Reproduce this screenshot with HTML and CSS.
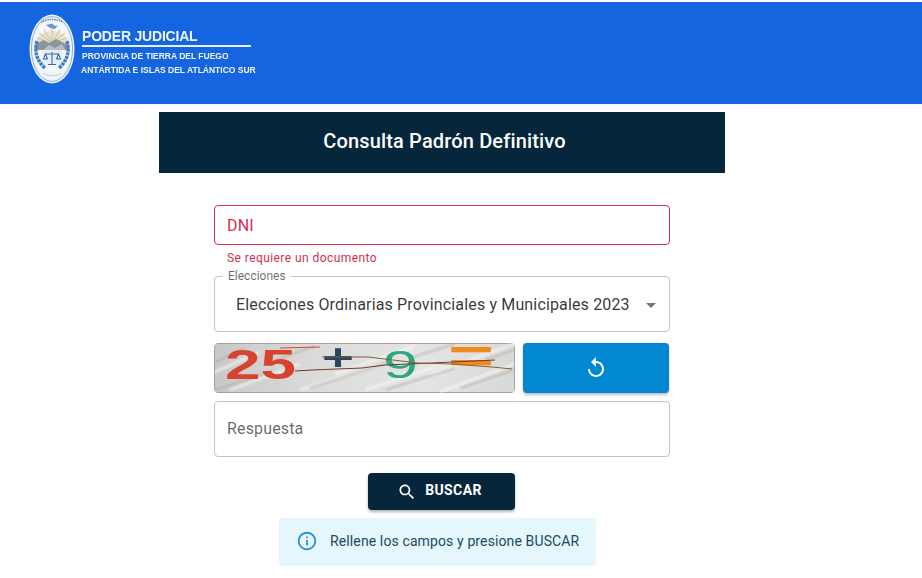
FILE: index.html
```html
<!DOCTYPE html>
<html lang="es">
<head>
<meta charset="utf-8">
<title>Consulta Padrón Definitivo</title>
<link rel="stylesheet" href="styles.css">
</head>
<body>
<header class="site-header">
  <svg class="seal" width="46" height="70" viewBox="0 0 46 70">
    <ellipse cx="23" cy="35" rx="22.5" ry="34.5" fill="#eef3f9"/>
    <ellipse cx="23" cy="35" rx="20.6" ry="32.4" fill="none" stroke="#8fb2de" stroke-width="1"/>
    <ellipse cx="23" cy="35" rx="18.6" ry="30" fill="#f4f6f8"/>
    <path d="M12 8.500 C17 4.500 29 4.500 34 8.500" fill="none" stroke="#5d83b3" stroke-width="1.400" stroke-dasharray="1.500 .8"/>
    <path d="M17 11 L23 9.500 L26 12 L29 11 L26 15 L21 14Z" fill="#6e97c6"/>
    <path d="M7 29 C8 13 38 13 39 29Z" fill="#e9e2cc"/>
    <path d="M23 29 L8 24 M23 29 L10 19 M23 29 L15 15.500 M23 29 L23 14.500 M23 29 L31 15.500 M23 29 L36 19 M23 29 L38 24" stroke="#cdc3a2" stroke-width="1"/>
    <path d="M6 36 V31 L14 26 L20 29 L27 25 L33 28 L40 31 V36Z" fill="#8a959e"/>
    <path d="M14 36 L20 31 L26 34 L33 30 L36 36Z" fill="#b7bec3"/>
    <rect x="13" y="36" width="20" height="15" fill="#e6eef6"/>
    <path d="M23 38 V50 M16.500 40 H29.500 M16.500 40 L14.500 45 H18.500Z M29.500 40 L27.500 45 H31.500Z M19 50.500 H27" stroke="#3b6ca6" stroke-width="1.100" fill="none"/>
    <path d="M8 27 C5 38 8 47 16 54" stroke="#3f7fbf" stroke-width="3.400" fill="none" stroke-dasharray="3 .8"/>
    <path d="M38 27 C41 38 38 47 30 54" stroke="#3f7fbf" stroke-width="3.400" fill="none" stroke-dasharray="3 .8"/>
    <path d="M14 59 C18 62.500 28 62.500 32 59" fill="none" stroke="#b9c9dc" stroke-width="1.600" stroke-dasharray="1.500 .8"/>
  </svg>
  <div class="brand">
    <div class="brand-name">PODER JUDICIAL</div>
    <div class="brand-line">PROVINCIA DE TIERRA DEL FUEGO</div>
    <div class="brand-line brand-line-last">ANTÁRTIDA E ISLAS DEL ATLÁNTICO SUR</div>
  </div>
</header>

<main class="panel">
  <h1 class="panel-title">Consulta Padrón Definitivo</h1>
  <form class="form">
    <div class="field field-error"><span class="field-text">DNI</span></div>
    <div class="helper">Se requiere un documento</div>

    <div class="field field-select">
      <span class="legend">Elecciones</span>
      <span class="select-value">Elecciones Ordinarias Provinciales y Municipales 2023</span>
      <span class="caret"></span>
    </div>

    <div class="captcha-row">
      <svg class="captcha" width="301" height="50" viewBox="0 0 299 48">
        <defs>
          <linearGradient id="paper" x1="0" y1="0" x2="1" y2="0">
            <stop offset="0" stop-color="#c8c8c6"/><stop offset="0.35" stop-color="#dcdcda"/><stop offset="0.7" stop-color="#e4e4e2"/><stop offset="1" stop-color="#d8d8d6"/>
          </linearGradient>
          <filter id="soft"><feGaussianBlur stdDeviation="1"/></filter>
          <filter id="edge"><feGaussianBlur stdDeviation=".35"/></filter>
        </defs>
        <rect width="299" height="48" fill="url(#paper)"/>
        <g filter="url(#soft)" fill="none" opacity=".75">
          <path stroke="#f7f7f6" stroke-width="2.500" d="M0 28 L45 8 M15 46 L85 20 M85 46 L160 22 M120 30 L200 2 M150 46 L235 18 M215 30 L299 0 M225 48 L299 20"/>
          <path stroke="#a8a8a6" stroke-width="1.600" d="M0 46 L55 28 M0 18 L30 4 M60 16 L100 2 M95 44 L175 18 M170 46 L240 24 M195 14 L240 0 M245 44 L299 26 M270 16 L299 6"/>
        </g>
        <g filter="url(#edge)">
          <text class="cap cap-red" x="10" y="35" textLength="71" lengthAdjust="spacingAndGlyphs">25</text>
          <text class="cap cap-navy" x="107" y="26" textLength="32" lengthAdjust="spacingAndGlyphs">+</text>
          <text class="cap cap-green" x="168" y="34" textLength="35" lengthAdjust="spacingAndGlyphs">9</text>
          <text class="cap cap-orange" x="233" y="29" textLength="46" lengthAdjust="spacingAndGlyphs">=</text>
          <path d="M65 4 L105 3" stroke="#d9432e" stroke-width="1" fill="none"/>
          <path d="M80 27 L97 26 L147 24 L170 21 L217 19 L237 18 L280 16" fill="none" stroke="#6e3a2e" stroke-width="1"/>
          <path d="M107 13 L153 13 L203 19 L237 20 L277 23 L297 25" fill="none" stroke="#8a5a3a" stroke-width="1"/>
        </g>
      </svg>
      <button class="refresh" type="button" aria-label="Recargar">
        <svg width="24" height="24" viewBox="0 0 24 24"><path fill="#fff" d="M12 5V1L7 6l5 5V7c3.310 0 6 2.690 6 6s-2.690 6-6 6-6-2.690-6-6H4c0 4.420 3.580 8 8 8s8-3.580 8-8-3.580-8-8-8z"/></svg>
      </button>
    </div>

    <div class="field field-answer"><span class="field-text field-muted">Respuesta</span></div>

    <div class="actions">
      <button class="search" type="button">
        <svg width="20" height="20" viewBox="0 0 24 24"><path fill="#fff" d="M15.500 14h-.79l-.28-.27C15.410 12.590 16 11.110 16 9.500 16 5.910 13.090 3 9.500 3S3 5.910 3 9.500 5.910 16 9.500 16c1.610 0 3.090-.59 4.230-1.570l.27.28v.79l5 4.990L20.490 19l-4.990-5zm-6 0C7.010 14 5 11.990 5 9.500S7.010 5 9.500 5 14 7.010 14 9.500 11.990 14 9.500 14z"/></svg>
        <span class="search-label">BUSCAR</span>
      </button>
    </div>

    <div class="alert-row">
      <div class="alert">
        <svg width="22" height="22" viewBox="0 0 24 24"><path fill="#2a97d0" d="M11 7h2v2h-2zm0 4h2v6h-2zm1-9C6.480 2 2 6.480 2 12s4.480 10 10 10 10-4.480 10-10S17.520 2 12 2zm0 18c-4.410 0-8-3.590-8-8s3.590-8 8-8 8 3.590 8 8-3.590 8-8 8z"/></svg>
        <span>Rellene los campos y presione BUSCAR</span>
      </div>
    </div>
  </form>
</main>
</body>
</html>
```

FILE: styles.css
```css
* { box-sizing: border-box; }

html, body { margin: 0; height: 578px; overflow: hidden; }

body {
  background: #fff;
  font-family: Roboto, "Liberation Sans", sans-serif;
  padding-top: 2px;
}

.site-header {
  height: 102px;
  background: #1565e0;
  display: flex;
  align-items: flex-start;
  padding: 12px 0 0 29px;
  color: #eef4fc;
  font-family: "Liberation Sans", Arial, sans-serif;
  font-weight: 700;
}

.seal { flex: none; filter: blur(.4px); }

.brand { margin: 13px 0 0 7px; filter: blur(.25px); }

.brand-name {
  font-size: 14px;
  letter-spacing: -.2px;
  line-height: 17px;
  width: 169px;
  padding-top: 1px;
  border-bottom: 2px solid #e6effb;
  white-space: nowrap;
}

.brand-line {
  font-size: 8.500px;
  line-height: 10px;
  margin-top: 4px;
  white-space: nowrap;
}

.brand-line-last { margin-left: -1px; margin-top: 4px; }

.panel {
  width: 566px;
  margin: 8px 0 0 159px;
}

.panel-title {
  margin: 0;
  height: 61px;
  padding-left: 5px;
  background: #05263b;
  color: #fff;
  font-size: 20px;
  font-weight: 500;
  letter-spacing: .15px;
  line-height: 59px;
  text-align: center;
}

.form {
  padding: 32px 55px 0;
  color: rgba(0, 0, 0, .8);
}

.field {
  position: relative;
  display: flex;
  align-items: center;
  border: 1px solid #c4c4c4;
  border-radius: 4px;
  padding: 0 12px 2px;
  font-size: 16px;
  letter-spacing: .15px;
}

.field-error {
  height: 40px;
  border-color: #d32f4f;
  color: #d32f4f;
  padding-bottom: 0;
}

.field-muted { color: rgba(0, 0, 0, .6); }

.helper {
  margin: 6px 0 0 13px;
  height: 25px;
  font-size: 12px;
  line-height: 15px;
  letter-spacing: .43px;
  color: #d32f4f;
}

.field-select {
  height: 56px;
  padding: 0 13px 0 21px;
  justify-content: space-between;
}

.legend {
  position: absolute;
  top: -8px;
  left: 8px;
  padding: 0 5px;
  background: #fff;
  font-size: 12px;
  line-height: 14px;
  letter-spacing: 0;
  color: rgba(0, 0, 0, .6);
}

.select-value { white-space: nowrap; }

.caret {
  width: 0;
  height: 0;
  margin-top: 2px;
  border-left: 5px solid transparent;
  border-right: 5px solid transparent;
  border-top: 5px solid #757575;
}

.captcha-row {
  display: flex;
  justify-content: space-between;
  margin-top: 11px;
  padding-right: 1px;
}

.captcha {
  display: block;
  overflow: visible;
  border-radius: 4px;
  border: 1px solid #a5a09c;
}

.cap { font-family: "Liberation Sans", sans-serif; font-weight: 700; }
.cap-red { font-size: 42px; fill: #d9432e; }
.cap-navy { font-size: 36px; fill: #2b4560; }
.cap-green { font-size: 38px; fill: #2aa87e; font-weight: 400; }
.cap-orange { font-size: 48px; fill: #f08a1c; }

.refresh {
  width: 146px;
  height: 50px;
  border: 0;
  border-radius: 4px;
  background: #0288d1;
  display: flex;
  align-items: center;
  justify-content: center;
  padding: 0;
  box-shadow: 0 2px 3px rgba(0, 0, 0, .25);
}

.field-answer {
  height: 56px;
  margin-top: 8px;
}

.actions {
  display: flex;
  justify-content: center;
  margin-top: 16px;
  padding-right: 1px;
}

.search {
  width: 147px;
  height: 37px;
  border: 0;
  border-radius: 4px;
  background: #05263b;
  color: #fff;
  font-family: inherit;
  font-size: 14px;
  font-weight: 700;
  letter-spacing: .4px;
  display: flex;
  align-items: center;
  justify-content: center;
  gap: 8px;
  padding: 0 4px 0 0;
  box-shadow: 0 2px 3px rgba(0, 0, 0, .3);
}

.search-label { margin-top: -3px; }

.alert-row {
  display: flex;
  margin-top: 8px;
  padding-left: 65px;
}

.alert {
  width: 317px;
  height: 48px;
  border-radius: 4px;
  background: #e5f6fd;
  display: flex;
  align-items: center;
  gap: 12px;
  padding: 0 0 2px 17px;
  font-size: 14px;
  letter-spacing: .12px;
  color: #1a4a60;
  white-space: nowrap;
}
```
